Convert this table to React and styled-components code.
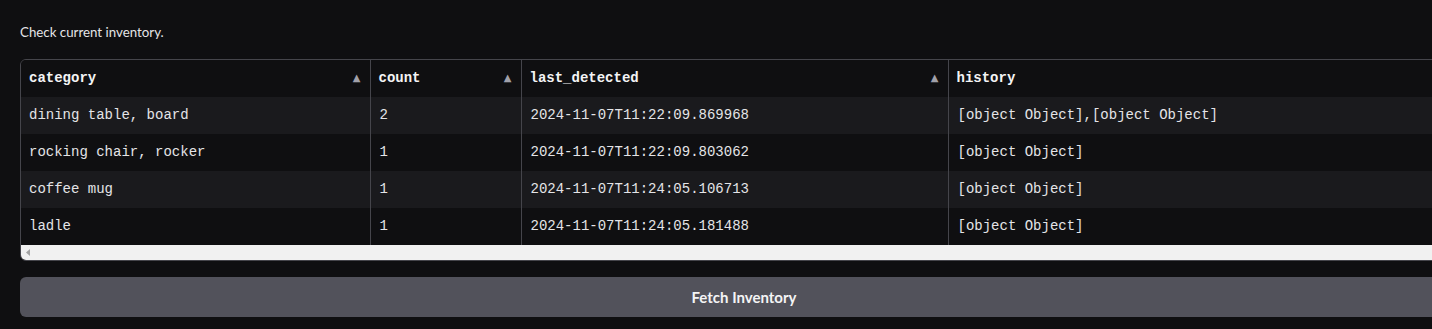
import React from "react";
import styled, { createGlobalStyle } from "styled-components";

const rows = [
  ["dining table, board", "2", "2024-11-07T11:22:09.869968", "[object Object],[object Object]"],
  ["rocking chair, rocker", "1", "2024-11-07T11:22:09.803062", "[object Object]"],
  ["coffee mug", "1", "2024-11-07T11:24:05.106713", "[object Object]"],
  ["ladle", "1", "2024-11-07T11:24:05.181488", "[object Object]"],
];

const columns = [
  { name: "category", width: 349, sort: true },
  { name: "count", width: 151, sort: true },
  { name: "last_detected", width: 427, sort: true },
  { name: "history", width: 520, sort: false },
];

const App = () => {
  return (
    <Page>
      <GlobalStyle />
      <Info>Check current inventory.</Info>
      <TableWrap>
        <Table>
          <colgroup>
            {columns.map((c) => (
              <col key={c.name} style={{ width: c.width }} />
            ))}
          </colgroup>
          <thead>
            <tr>
              {columns.map((c) => (
                <HeadCell key={c.name}>
                  <HeadInner>
                    <span>{c.name}</span>
                    {c.sort && <SortArrow>▲</SortArrow>}
                  </HeadInner>
                </HeadCell>
              ))}
            </tr>
          </thead>
          <tbody>
            {rows.map((r, i) => (
              <Row key={i} $odd={i % 2 === 0}>
                {r.map((v, j) => (
                  <Cell key={j}>{v}</Cell>
                ))}
              </Row>
            ))}
          </tbody>
        </Table>
        <ScrollTrack>
          <svg width="5" height="7" viewBox="0 0 5 7">
            <path d="M4 0 L0 3.5 L4 7 Z" fill="#a3a3a3" />
          </svg>
        </ScrollTrack>
      </TableWrap>
      <FetchButton>Fetch Inventory</FetchButton>
    </Page>
  );
};

export default App;

const GlobalStyle = createGlobalStyle`
  body {
    margin: 0;
    background: #0f0f11;
    overflow: hidden;
  }
`;

const Page = styled.div`
  width: 1448px;
  padding: 23px 0 0 20px;
  display: flex;
  flex-direction: column;
  font-family: Lato, "Open Sans", sans-serif;
`;

const Info = styled.div`
  color: #e4e4e7;
  font-size: 13.3px;
  line-height: 18px;
  margin-bottom: 18px;
`;

const TableWrap = styled.div`
  border: 1px solid #45454b;
  border-radius: 6px;
  overflow: hidden;
  background: #0f0f11;
`;

const Table = styled.table`
  width: 1447px;
  table-layout: fixed;
  border-collapse: collapse;
  font-family: "Liberation Mono", "DejaVu Sans Mono", monospace;
  font-size: 14px;
`;

const HeadCell = styled.th`
  height: 35px;
  padding: 0 8px 2px 8px;
  text-align: left;
  color: #f4f4f5;
  font-weight: 700;
  border-left: 1px solid #45454b;
  background: #0f0f11;
  &:first-child {
    border-left: none;
  }
`;

const HeadInner = styled.div`
  display: flex;
  align-items: center;
  justify-content: space-between;
`;

const SortArrow = styled.span`
  color: #a1a1aa;
  font-size: 10px;
  font-family: "DejaVu Sans", sans-serif;
  padding-right: 1px;
`;

const Row = styled.tr`
  background: ${(p) => (p.$odd ? "#1a1a1d" : "#0f0f11")};
`;

const Cell = styled.td`
  height: 35px;
  padding: 0 8px 2px 9px;
  color: #e4e4e7;
  border-left: 1px solid #45454b;
  white-space: nowrap;
  &:first-child {
    border-left: none;
    padding-left: 8px;
  }
`;

const ScrollTrack = styled.div`
  height: 15px;
  background: #f1f1f1;
  display: flex;
  align-items: center;
  padding-left: 5px;
`;

const FetchButton = styled.button`
  margin-top: 16px;
  height: 40px;
  border: none;
  border-radius: 6px;
  background: #52525b;
  color: #f4f4f5;
  font-family: Lato, "Open Sans", sans-serif;
  font-weight: 700;
  font-size: 15px;
`;
